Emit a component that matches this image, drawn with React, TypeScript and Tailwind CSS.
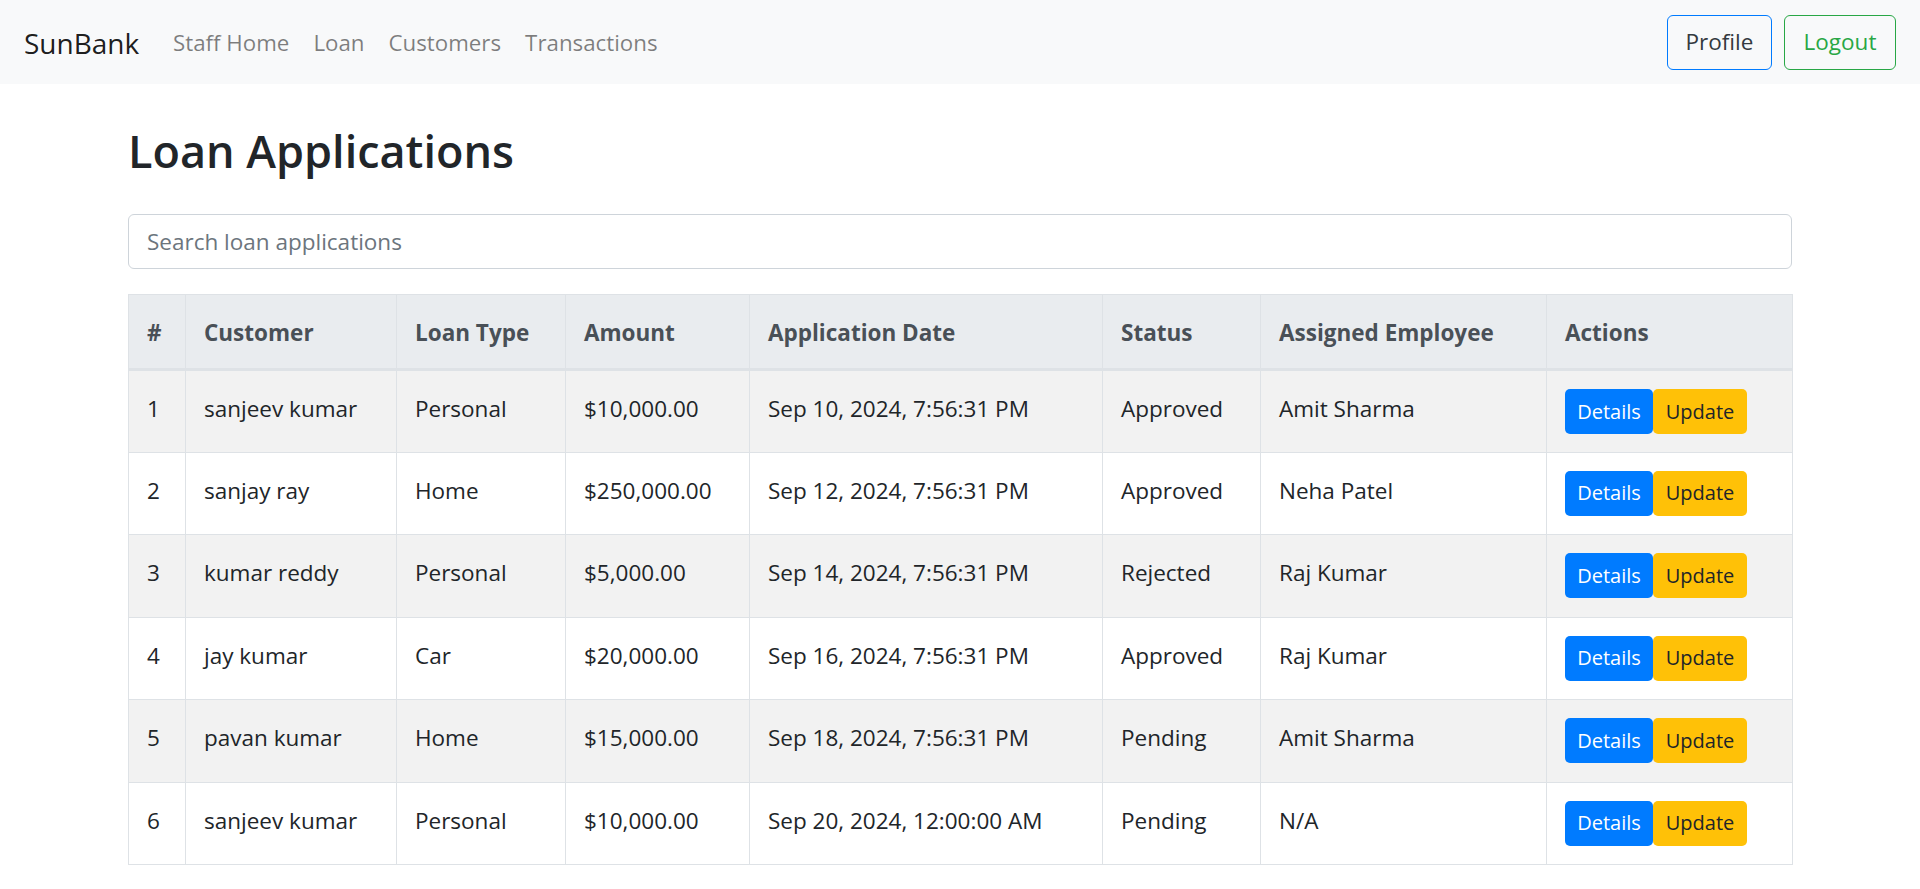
const links = ["Staff Home", "Loan", "Customers", "Transactions"];

const cols = [57, 211, 169, 184, 353, 158, 286, 246];

const headers = [
 "#",
 "Customer",
 "Loan Type",
 "Amount",
 "Application Date",
 "Status",
 "Assigned Employee",
 "Actions",
];

const loans = [
 { id: 1, customer: "sanjeev kumar", type: "Personal", amount: "$10,000.00", date: "Sep 10, 2024, 7:56:31 PM", status: "Approved", employee: "Amit Sharma" },
 { id: 2, customer: "sanjay ray", type: "Home", amount: "$250,000.00", date: "Sep 12, 2024, 7:56:31 PM", status: "Approved", employee: "Neha Patel" },
 { id: 3, customer: "kumar reddy", type: "Personal", amount: "$5,000.00", date: "Sep 14, 2024, 7:56:31 PM", status: "Rejected", employee: "Raj Kumar" },
 { id: 4, customer: "jay kumar", type: "Car", amount: "$20,000.00", date: "Sep 16, 2024, 7:56:31 PM", status: "Approved", employee: "Raj Kumar" },
 { id: 5, customer: "pavan kumar", type: "Home", amount: "$15,000.00", date: "Sep 18, 2024, 7:56:31 PM", status: "Pending", employee: "Amit Sharma" },
 { id: 6, customer: "sanjeev kumar", type: "Personal", amount: "$10,000.00", date: "Sep 20, 2024, 12:00:00 AM", status: "Pending", employee: "N/A" },
];

export default function App() {
 return (
  <div className="min-h-screen bg-white font-['Open_Sans',sans-serif] text-[#212529]">
   <nav className="flex h-[84px] items-center bg-[#f8f9fa] px-[24px]">
    <a className="mr-[24px] w-[113px] pt-[2px] text-[28px] leading-[45px] text-black/90">SunBank</a>
    <ul className="flex pt-[2px]">
     {links.map((l) => (
      <li key={l}>
       <a className="block px-[12px] text-[22.3px] leading-[36px] text-black/50">{l}</a>
      </li>
     ))}
    </ul>
    <div className="ml-auto flex gap-[12px]">
     <button className="h-[55px] w-[105px] rounded-[6px] border border-[#007bff] text-[22.5px] text-[#343a40]">
      Profile
     </button>
     <button className="h-[55px] w-[112px] rounded-[6px] border border-[#28a745] text-[22.5px] text-[#28a745]">
      Logout
     </button>
    </div>
   </nav>

   <main className="mx-auto w-[1664px]">
    <h1 className="mt-[40px] text-[45px] font-semibold leading-[53px]">Loan Applications</h1>

    <input
     type="text"
     placeholder="Search loan applications"
     className="mt-[37px] block h-[55px] w-full rounded-[6px] border border-[#ced4da] bg-white px-[18px] text-[22.5px] outline-none placeholder:text-[#6c757d]"
    />

    <table className="mt-[25px] w-full table-fixed border-collapse text-left">
     <colgroup>
      {cols.map((w, i) => (
       <col key={i} style={{ width: w }} />
      ))}
     </colgroup>
     <thead>
      <tr className="bg-[#e9ecef]">
       {headers.map((h) => (
        <th
         key={h}
         className="border border-b-[3px] border-[#dee2e6] px-[18px] pt-[18px] pb-[16px] text-[22.5px] font-bold leading-[39px] text-[#495057]"
        >
         {h}
        </th>
       ))}
      </tr>
     </thead>
     <tbody>
      {loans.map((r, i) => (
       <tr key={r.id} className={i % 2 === 0 ? "h-[82.5px] bg-[#f2f2f2]" : "h-[82.5px] bg-white"}>
        {[r.id, r.customer, r.type, r.amount, r.date, r.status, r.employee].map((v, j) => (
         <td key={j} className="border border-[#dee2e6] px-[18px] pt-[18px] align-top text-[22.5px] leading-[39px]">
          {v}
         </td>
        ))}
        <td className="border border-[#dee2e6] px-[18px] pt-[18px] align-top">
         <div className="flex">
          <button className="h-[45px] w-[88px] rounded-[5px] bg-[#007bff] text-[20px] text-white">Details</button>
          <button className="h-[45px] w-[94px] rounded-[5px] bg-[#ffc107] text-[20px] text-[#212529]">Update</button>
         </div>
        </td>
       </tr>
      ))}
     </tbody>
    </table>
   </main>
  </div>
 );
}
